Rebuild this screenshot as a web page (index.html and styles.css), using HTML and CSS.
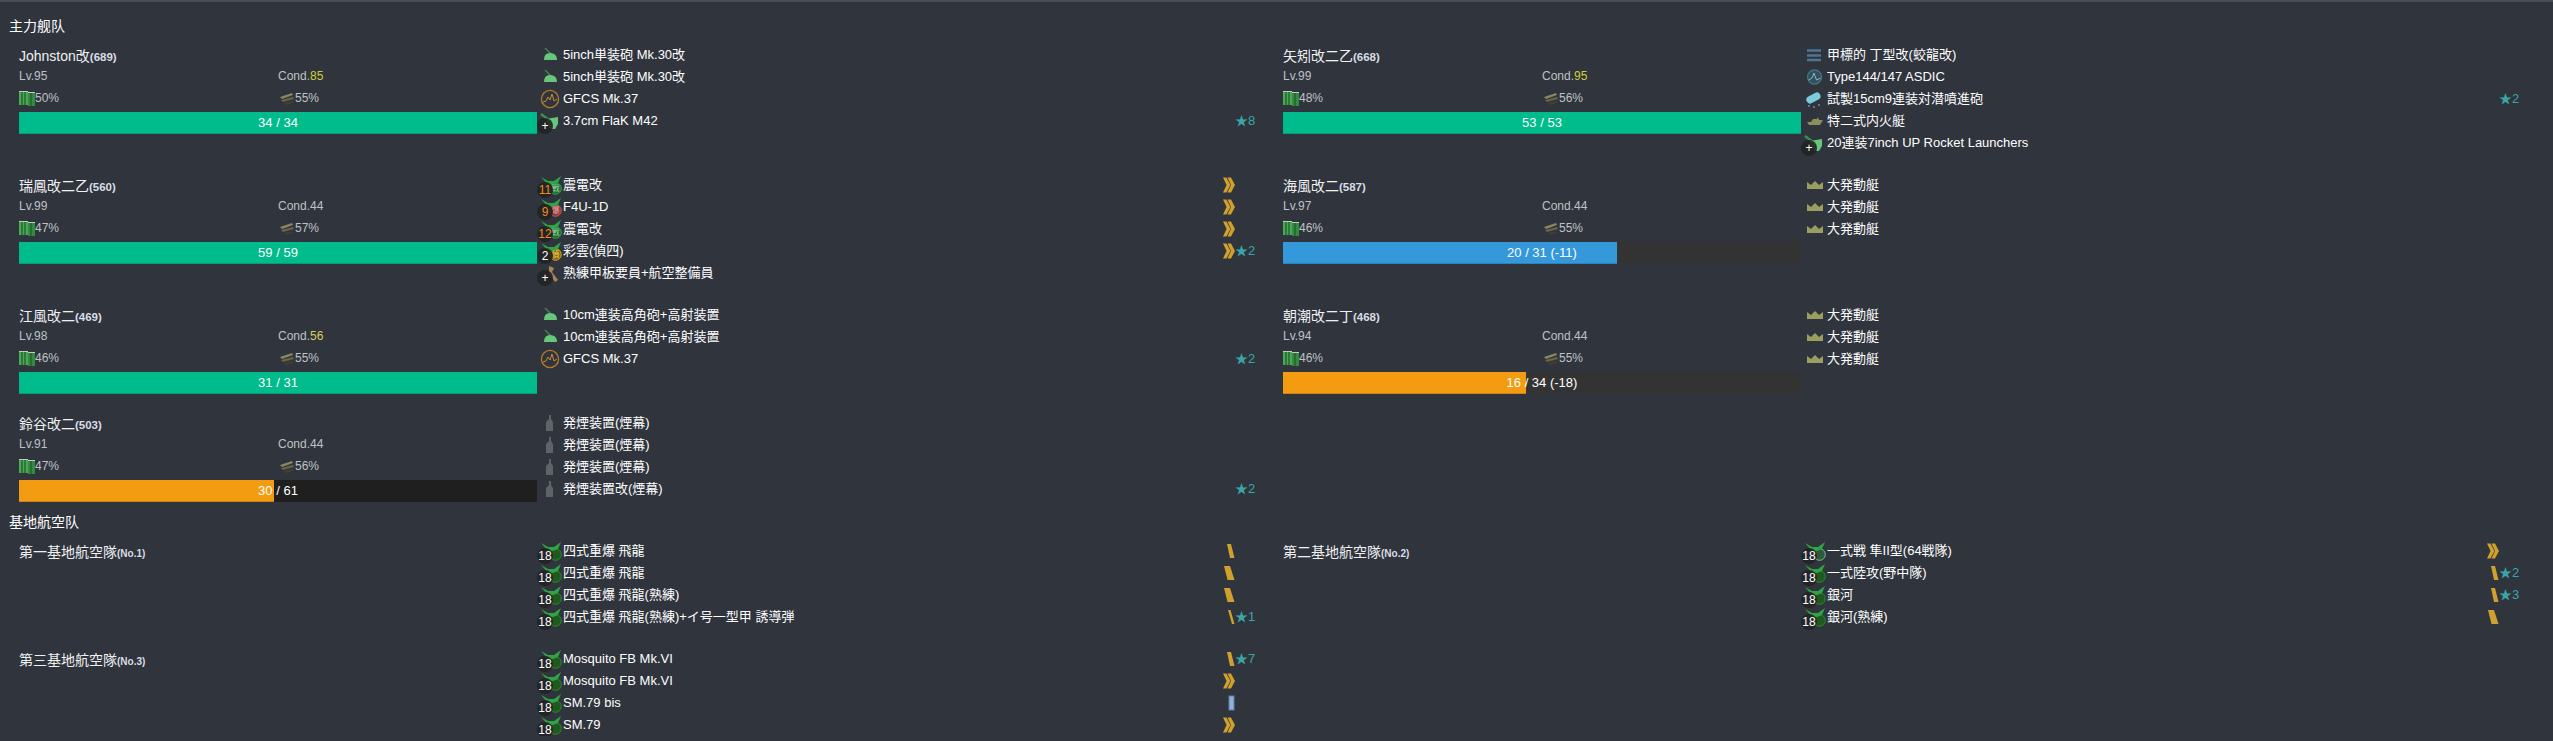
FILE: index.html
```html
<!DOCTYPE html>
<html lang="ja">
<head>
    <meta charset="UTF-8">
    <meta name="viewport" content="width=device-width, initial-scale=1.0">
    <title>Fleet</title>
    <link rel="stylesheet" href="styles.css">
</head>
<body>
    <!-- icon sprites -->
    <svg class="sprites" width="0" height="0">
        <symbol id="i-gun" viewBox="0 0 22 22"><path d="M5 4 L11 10" stroke="#3f7f52" stroke-width="1.6"/><path d="M4 16 Q4 9 10 9 Q17 9 17 16Z" fill="#66c67c"/></symbol>
        <symbol id="i-radar" viewBox="0 0 22 22"><circle cx="10" cy="11" r="8.6" fill="none" stroke="#b87a2c" stroke-width="1.3"/><path d="M3 14 L6 13 L8 9 L10 12 L12 6 L14 13 L17 11" fill="none" stroke="#c98a34" stroke-width="1"/></symbol>
        <symbol id="i-aa" viewBox="0 0 22 22"><path d="M1 4 L9 10" stroke="#3f8f52" stroke-width="2.4"/><path d="M6 9 L18 7 L18 14 L15 19 L10 19Z" fill="#66c67c"/></symbol>
        <symbol id="i-midget" viewBox="0 0 22 22"><path d="M3 6.500H17M3 11.500H17M3 16H17" stroke="#4f7494" stroke-width="2.600"/></symbol>
        <symbol id="i-sonar" viewBox="0 0 22 22"><circle cx="10.500" cy="11" r="7" fill="#33505e" stroke="#3f7485" stroke-width="1.300"/><path d="M4.500 14 L8 12 L10 7 L12.500 14 L16.500 12" fill="none" stroke="#8fb4c2" stroke-width="1"/></symbol>
        <symbol id="i-asw" viewBox="0 0 22 22"><rect x="2" y="6" width="15" height="7.500" rx="3.700" transform="rotate(-28 10 10)" fill="#7ccbdc"/><path d="M4 18h2M9 19h2M14 17h2" stroke="#6f8c96" stroke-width="1.500"/></symbol>
        <symbol id="i-tank" viewBox="0 0 22 22"><path d="M3 12 H7 L9 9 H13 L14 7 L15 10 H19 L16 15 H5Z" fill="#8b8f58"/></symbol>
        <symbol id="i-boat" viewBox="0 0 22 22"><path d="M3 8 L7 11 L11 7 L15 11 L19 8 V15 H3Z" fill="#9a9f60"/></symbol>
        <symbol id="i-smoke" viewBox="0 0 22 22"><path d="M9 3 V7 L6 10 V19 H13 V10 L11 7 V3Z" fill="#5f6266"/></symbol>
        <symbol id="i-crew" viewBox="0 0 22 22"><path d="M9 4 L14 6 L12 10 L18 18 L15 20 L9 11Z" fill="#a9865a"/></symbol>
        <symbol id="i-fighter" viewBox="0 0 22 22"><circle cx="15.500" cy="14.500" r="5.800" fill="#1f6e33" stroke="#35a04a"/><path d="M1 3 L8 7 L14 7 L21 2 L18 9 L13 11 L8 11Z" fill="#2fa444"/></symbol>
        <symbol id="i-bomber" viewBox="0 0 22 22"><circle cx="15.500" cy="14.500" r="5.800" fill="#8e3a3a" stroke="#c85a5a"/><path d="M1 3 L8 7 L14 7 L21 2 L18 9 L13 11 L8 11Z" fill="#2fa444"/></symbol>
        <symbol id="i-scout" viewBox="0 0 22 22"><circle cx="15.500" cy="14.500" r="5.800" fill="#8a6d10" stroke="#d0a020"/><path d="M1 3 L8 7 L14 7 L21 2 L18 9 L13 11 L8 11Z" fill="#2fa444"/></symbol>
        <symbol id="i-land" viewBox="0 0 22 22"><circle cx="15.500" cy="14.500" r="5.800" fill="#1d5a20" stroke="#2d8a2a"/><path d="M1 3 L8 7 L14 7 L21 2 L18 9 L13 11 L8 11Z" fill="#2fa444"/></symbol>
        <symbol id="i-fighter-land" viewBox="0 0 22 22"><circle cx="15.500" cy="14.500" r="5.800" fill="#2c5a3a" stroke="#7dbb8c"/><path d="M1 3 L8 7 L14 7 L21 2 L18 9 L13 11 L8 11Z" fill="#2fa444"/></symbol>
        <symbol id="i-fuel" viewBox="0 0 16 16"><rect x="0" y="1" width="9" height="14" fill="#4aa856"/><rect x="9" y="2" width="7" height="14" fill="#358a40"/><path d="M3 2V15M6 2V15M12 3V16" stroke="#1d5a28" stroke-width="1.200"/><path d="M0 1.500H9M9 2.500H16" stroke="#b8d0b8"/></symbol>
        <symbol id="i-ammo" viewBox="0 0 16 16"><path d="M1 7 L13 3 L14 5 L3 9Z" fill="#8f8562"/><path d="M2 10 L14 7 L15 9 L4 12Z" fill="#6b6346"/><path d="M5 13 L14 11 L14 13 L7 15Z" fill="#45402c"/></symbol>
        <symbol id="p-chev" viewBox="0 0 12 16"><path d="M0 0.500H3.500L7.500 8L3.500 15.500H0L3.500 8ZM4.500 0.500H8L12 8L8 15.500H4.500L8 8Z" fill="#cfa02e"/></symbol>
        <symbol id="p-slash" viewBox="0 0 12 16"><path d="M5 1L7.500 1L11.500 15L9 15Z" fill="#cfa02e"/></symbol>
        <symbol id="p-wide" viewBox="0 0 12 16"><path d="M4 1L8 1L11.500 15L7 15Z" fill="#cfa02e"/></symbol>
        <symbol id="p-block" viewBox="0 0 12 16"><path d="M1 1L7 1L11.500 15L4.500 15Z" fill="#cfa02e"/></symbol>
        <symbol id="p-blue" viewBox="0 0 12 16"><rect x="6" y="1" width="5" height="14" fill="#8fb0d8" stroke="#5c7ea8"/></symbol>
    </svg>

    <section class="section section-first">
        <h2 class="section-title">主力舰队</h2>
        <div class="fleet">

            <div class="ship">
                <div class="ship-info">
                    <div class="ship-name">Johnston改<small>(689)</small></div>
                    <div class="stats"><span>Lv.95</span><span>Cond.<b class="cond-high">85</b></span></div>
                    <div class="stats"><span class="res"><svg class="res-icon"><use href="#i-fuel"/></svg>50%</span><span class="res res-ammo"><svg class="res-icon"><use href="#i-ammo"/></svg>55%</span></div>
                    <div class="bar"><div class="bar-fill green" style="width:100%"></div><span class="bar-label">34 / 34</span></div>
                </div>
                <ul class="slots">
                    <li class="slot"><span class="slot-icon"><svg><use href="#i-gun"/></svg></span><span class="slot-name">5inch単装砲 Mk.30改</span></li>
                    <li class="slot"><span class="slot-icon"><svg><use href="#i-gun"/></svg></span><span class="slot-name">5inch単装砲 Mk.30改</span></li>
                    <li class="slot"><span class="slot-icon"><svg><use href="#i-radar"/></svg></span><span class="slot-name">GFCS Mk.37</span></li>
                    <li class="slot"><span class="slot-icon"><svg><use href="#i-aa"/></svg><i class="badge">+</i></span><span class="slot-name">3.7cm FlaK M42</span><span class="star">★8</span></li>
                </ul>
            </div>

            <div class="ship">
                <div class="ship-info">
                    <div class="ship-name">矢矧改二乙<small>(668)</small></div>
                    <div class="stats"><span>Lv.99</span><span>Cond.<b class="cond-high">95</b></span></div>
                    <div class="stats"><span class="res"><svg class="res-icon"><use href="#i-fuel"/></svg>48%</span><span class="res res-ammo"><svg class="res-icon"><use href="#i-ammo"/></svg>56%</span></div>
                    <div class="bar"><div class="bar-fill green" style="width:100%"></div><span class="bar-label">53 / 53</span></div>
                </div>
                <ul class="slots">
                    <li class="slot"><span class="slot-icon"><svg><use href="#i-midget"/></svg></span><span class="slot-name">甲標的 丁型改(蛟龍改)</span></li>
                    <li class="slot"><span class="slot-icon"><svg><use href="#i-sonar"/></svg></span><span class="slot-name">Type144/147 ASDIC</span></li>
                    <li class="slot"><span class="slot-icon"><svg><use href="#i-asw"/></svg></span><span class="slot-name">試製15cm9連装対潜噴進砲</span><span class="star">★2</span></li>
                    <li class="slot"><span class="slot-icon"><svg><use href="#i-tank"/></svg></span><span class="slot-name">特二式内火艇</span></li>
                    <li class="slot"><span class="slot-icon"><svg><use href="#i-aa"/></svg><i class="badge">+</i></span><span class="slot-name">20連装7inch UP Rocket Launchers</span></li>
                </ul>
            </div>

            <div class="ship">
                <div class="ship-info">
                    <div class="ship-name">瑞鳳改二乙<small>(560)</small></div>
                    <div class="stats"><span>Lv.99</span><span>Cond.44</span></div>
                    <div class="stats"><span class="res"><svg class="res-icon"><use href="#i-fuel"/></svg>47%</span><span class="res res-ammo"><svg class="res-icon"><use href="#i-ammo"/></svg>57%</span></div>
                    <div class="bar"><div class="bar-fill green" style="width:100%"></div><span class="bar-label">59 / 59</span></div>
                </div>
                <ul class="slots">
                    <li class="slot"><span class="slot-icon"><svg><use href="#i-fighter"/></svg><i class="mark mark-green">戦</i><i class="badge low">11</i></span><span class="slot-name">震電改</span><svg class="prof"><use href="#p-chev"/></svg></li>
                    <li class="slot"><span class="slot-icon"><svg><use href="#i-bomber"/></svg><i class="mark mark-red">爆</i><i class="badge low">9</i></span><span class="slot-name">F4U-1D</span><svg class="prof"><use href="#p-chev"/></svg></li>
                    <li class="slot"><span class="slot-icon"><svg><use href="#i-fighter"/></svg><i class="mark mark-green">戦</i><i class="badge low">12</i></span><span class="slot-name">震電改</span><svg class="prof"><use href="#p-chev"/></svg></li>
                    <li class="slot"><span class="slot-icon"><svg><use href="#i-scout"/></svg><i class="mark mark-gold">偵</i><i class="badge">2</i></span><span class="slot-name">彩雲(偵四)</span><svg class="prof"><use href="#p-chev"/></svg><span class="star star-after">★2</span></li>
                    <li class="slot"><span class="slot-icon"><svg><use href="#i-crew"/></svg><i class="badge">+</i></span><span class="slot-name">熟練甲板要員+航空整備員</span></li>
                </ul>
            </div>

            <div class="ship">
                <div class="ship-info">
                    <div class="ship-name">海風改二<small>(587)</small></div>
                    <div class="stats"><span>Lv.97</span><span>Cond.44</span></div>
                    <div class="stats"><span class="res"><svg class="res-icon"><use href="#i-fuel"/></svg>46%</span><span class="res res-ammo"><svg class="res-icon"><use href="#i-ammo"/></svg>55%</span></div>
                    <div class="bar bar-light"><div class="bar-fill blue" style="width:64.5%"></div><span class="bar-label">20 / 31 (-11)</span></div>
                </div>
                <ul class="slots">
                    <li class="slot"><span class="slot-icon"><svg><use href="#i-boat"/></svg></span><span class="slot-name">大発動艇</span></li>
                    <li class="slot"><span class="slot-icon"><svg><use href="#i-boat"/></svg></span><span class="slot-name">大発動艇</span></li>
                    <li class="slot"><span class="slot-icon"><svg><use href="#i-boat"/></svg></span><span class="slot-name">大発動艇</span></li>
                </ul>
            </div>

            <div class="ship">
                <div class="ship-info">
                    <div class="ship-name">江風改二<small>(469)</small></div>
                    <div class="stats"><span>Lv.98</span><span>Cond.<b class="cond-mid">56</b></span></div>
                    <div class="stats"><span class="res"><svg class="res-icon"><use href="#i-fuel"/></svg>46%</span><span class="res res-ammo"><svg class="res-icon"><use href="#i-ammo"/></svg>55%</span></div>
                    <div class="bar"><div class="bar-fill green" style="width:100%"></div><span class="bar-label">31 / 31</span></div>
                </div>
                <ul class="slots">
                    <li class="slot"><span class="slot-icon"><svg><use href="#i-gun"/></svg></span><span class="slot-name">10cm連装高角砲+高射装置</span></li>
                    <li class="slot"><span class="slot-icon"><svg><use href="#i-gun"/></svg></span><span class="slot-name">10cm連装高角砲+高射装置</span></li>
                    <li class="slot"><span class="slot-icon"><svg><use href="#i-radar"/></svg></span><span class="slot-name">GFCS Mk.37</span><span class="star">★2</span></li>
                </ul>
            </div>

            <div class="ship">
                <div class="ship-info">
                    <div class="ship-name">朝潮改二丁<small>(468)</small></div>
                    <div class="stats"><span>Lv.94</span><span>Cond.44</span></div>
                    <div class="stats"><span class="res"><svg class="res-icon"><use href="#i-fuel"/></svg>46%</span><span class="res res-ammo"><svg class="res-icon"><use href="#i-ammo"/></svg>55%</span></div>
                    <div class="bar bar-light"><div class="bar-fill orange" style="width:47%"></div><span class="bar-label">16 / 34 (-18)</span></div>
                </div>
                <ul class="slots">
                    <li class="slot"><span class="slot-icon"><svg><use href="#i-boat"/></svg></span><span class="slot-name">大発動艇</span></li>
                    <li class="slot"><span class="slot-icon"><svg><use href="#i-boat"/></svg></span><span class="slot-name">大発動艇</span></li>
                    <li class="slot"><span class="slot-icon"><svg><use href="#i-boat"/></svg></span><span class="slot-name">大発動艇</span></li>
                </ul>
            </div>

            <div class="ship">
                <div class="ship-info">
                    <div class="ship-name">鈴谷改二<small>(503)</small></div>
                    <div class="stats"><span>Lv.91</span><span>Cond.44</span></div>
                    <div class="stats"><span class="res"><svg class="res-icon"><use href="#i-fuel"/></svg>47%</span><span class="res res-ammo"><svg class="res-icon"><use href="#i-ammo"/></svg>56%</span></div>
                    <div class="bar"><div class="bar-fill orange" style="width:49.2%"></div><span class="bar-label">30 / 61</span></div>
                </div>
                <ul class="slots">
                    <li class="slot"><span class="slot-icon"><svg><use href="#i-smoke"/></svg></span><span class="slot-name">発煙装置(煙幕)</span></li>
                    <li class="slot"><span class="slot-icon"><svg><use href="#i-smoke"/></svg></span><span class="slot-name">発煙装置(煙幕)</span></li>
                    <li class="slot"><span class="slot-icon"><svg><use href="#i-smoke"/></svg></span><span class="slot-name">発煙装置(煙幕)</span></li>
                    <li class="slot"><span class="slot-icon"><svg><use href="#i-smoke"/></svg></span><span class="slot-name">発煙装置改(煙幕)</span><span class="star">★2</span></li>
                </ul>
            </div>

        </div>
    </section>

    <section class="section">
        <h2 class="section-title">基地航空队</h2>
        <div class="fleet">

            <div class="ship">
                <div class="ship-name base-name">第一基地航空隊<small>(No.1)</small></div>
                <ul class="slots">
                    <li class="slot"><span class="slot-icon"><svg><use href="#i-land"/></svg><i class="badge">18</i></span><span class="slot-name">四式重爆 飛龍</span><svg class="prof"><use href="#p-wide"/></svg></li>
                    <li class="slot"><span class="slot-icon"><svg><use href="#i-land"/></svg><i class="badge">18</i></span><span class="slot-name">四式重爆 飛龍</span><svg class="prof"><use href="#p-block"/></svg></li>
                    <li class="slot"><span class="slot-icon"><svg><use href="#i-land"/></svg><i class="badge">18</i></span><span class="slot-name">四式重爆 飛龍(熟練)</span><svg class="prof"><use href="#p-block"/></svg></li>
                    <li class="slot"><span class="slot-icon"><svg><use href="#i-land"/></svg><i class="badge">18</i></span><span class="slot-name">四式重爆 飛龍(熟練)+イ号一型甲 誘導弾</span><svg class="prof"><use href="#p-slash"/></svg><span class="star star-after">★1</span></li>
                </ul>
            </div>

            <div class="ship">
                <div class="ship-name base-name">第二基地航空隊<small>(No.2)</small></div>
                <ul class="slots">
                    <li class="slot"><span class="slot-icon"><svg><use href="#i-fighter-land"/></svg><i class="badge">18</i></span><span class="slot-name">一式戦 隼II型(64戦隊)</span><svg class="prof"><use href="#p-chev"/></svg></li>
                    <li class="slot"><span class="slot-icon"><svg><use href="#i-land"/></svg><i class="badge">18</i></span><span class="slot-name">一式陸攻(野中隊)</span><svg class="prof"><use href="#p-wide"/></svg><span class="star star-after">★2</span></li>
                    <li class="slot"><span class="slot-icon"><svg><use href="#i-land"/></svg><i class="badge">18</i></span><span class="slot-name">銀河</span><svg class="prof"><use href="#p-wide"/></svg><span class="star star-after">★3</span></li>
                    <li class="slot"><span class="slot-icon"><svg><use href="#i-land"/></svg><i class="badge">18</i></span><span class="slot-name">銀河(熟練)</span><svg class="prof"><use href="#p-block"/></svg></li>
                </ul>
            </div>

            <div class="ship">
                <div class="ship-name base-name">第三基地航空隊<small>(No.3)</small></div>
                <ul class="slots">
                    <li class="slot"><span class="slot-icon"><svg><use href="#i-land"/></svg><i class="badge">18</i></span><span class="slot-name">Mosquito FB Mk.VI</span><svg class="prof"><use href="#p-wide"/></svg><span class="star star-after">★7</span></li>
                    <li class="slot"><span class="slot-icon"><svg><use href="#i-land"/></svg><i class="badge">18</i></span><span class="slot-name">Mosquito FB Mk.VI</span><svg class="prof"><use href="#p-chev"/></svg></li>
                    <li class="slot"><span class="slot-icon"><svg><use href="#i-land"/></svg><i class="badge">18</i></span><span class="slot-name">SM.79 bis</span><svg class="prof"><use href="#p-blue"/></svg></li>
                    <li class="slot"><span class="slot-icon"><svg><use href="#i-land"/></svg><i class="badge">18</i></span><span class="slot-name">SM.79</span><svg class="prof"><use href="#p-chev"/></svg></li>
                </ul>
            </div>

        </div>
    </section>
</body>
</html>
```

FILE: styles.css
```css
body {
    margin: 0;
    background-color: #2f343d;
    border-top: 2px solid #484d56;
    color: #fff;
    font-family: "Liberation Sans", "Noto Sans CJK JP", sans-serif;
    font-size: 13px;
}

.sprites {
    position: absolute;
}

.section {
    padding: 12px 0 0 9px;
}

.section-first {
    padding-top: 14px;
}

.section-title {
    margin: 0 0 8px;
    font-size: 14px;
    font-weight: normal;
    line-height: 20px;
    color: #fff;
}

.fleet {
    display: grid;
    grid-template-columns: 1264px 1264px;
    row-gap: 20px;
    padding-left: 10px;
    align-items: start;
}

.ship {
    display: grid;
    grid-template-columns: 518px 746px;
}

.ship-name {
    font-size: 14px;
    line-height: 24px;
    height: 21px;
    color: #f0f0f0;
}

.ship-name small {
    font-size: 11.5px;
    font-weight: bold;
    color: #d8dde6;
}

.base-name small {
    font-size: 10px;
}

.stats {
    display: grid;
    grid-template-columns: 259px 259px;
    height: 22px;
    line-height: 22px;
    font-size: 12px;
    color: #bfc2c6;
}

.res {
    display: flex;
    align-items: center;
}

.res-ammo {
    padding-left: 1px;
}

.res-icon {
    width: 16px;
    height: 16px;
}

.cond-high {
    font-weight: normal;
    color: #cfcf3a;
}

.cond-mid {
    font-weight: normal;
    color: #d8cf5a;
}

.bar {
    position: relative;
    height: 22px;
    margin-top: 3px;
    margin-bottom: -2px;
    background-color: #1f1f1f;
}

.bar-light {
    background-color: #333333;
}

.bar-fill {
    height: 21px;
    border-bottom: 1px solid rgba(0, 0, 0, 0.15);
}

.green { background-color: #00bb8b; }
.blue { background-color: #3498db; }
.orange { background-color: #f39c12; }

.bar-label {
    position: absolute;
    top: 0;
    left: 0;
    right: 0;
    text-align: center;
    line-height: 22px;
    color: #fff;
}

.slots {
    list-style: none;
    margin: 0;
    padding: 0 31px 0 0;
}

.slot {
    display: flex;
    align-items: center;
    height: 22px;
    line-height: 22px;
}

.slot-icon {
    position: relative;
    width: 22px;
    height: 22px;
    margin-left: 3px;
    margin-right: 1px;
}

.slot-icon svg {
    display: block;
    width: 22px;
    height: 22px;
}

.mark {
    position: absolute;
    left: 11px;
    top: 10px;
    width: 9px;
    font-style: normal;
    font-size: 8px;
    line-height: 9px;
    text-align: center;
}

.mark-green { color: #9fd8a8; }
.mark-red { color: #e8a0a0; }
.mark-gold { color: #f0d060; }

.badge {
    position: absolute;
    left: -3px;
    top: 8px;
    width: 16px;
    height: 16px;
    border-radius: 50%;
    background-color: rgba(34, 34, 34, 0.9);
    color: #fff;
    font-style: normal;
    font-size: 12px;
    line-height: 16px;
    text-align: center;
}

.badge.low {
    color: #f58a1f;
}

.slot-name {
    flex: 1;
    line-height: 24px;
}

.prof {
    width: 12px;
    height: 16px;
    margin-right: 17px;
}

.star {
    width: 17px;
    color: #3ba5a5;
    white-space: nowrap;
}

.star-after {
    margin-left: -17px;
}
```
